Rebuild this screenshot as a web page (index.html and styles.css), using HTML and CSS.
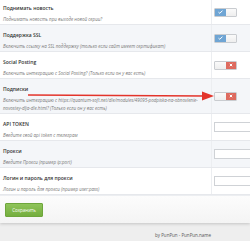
FILE: index.html
```html
<!DOCTYPE html>
<html lang="ru">
<head>
  <meta charset="UTF-8" />
  <meta name="viewport" content="width=device-width, initial-scale=1.0"/>
  <title>Настройки модуля</title>
  <link rel="stylesheet" href="styles.css">
</head>
<body>
  <div class="panel">
    <div class="row first">
      <div class="label">
        <div class="title">Поднимать новость</div>
        <div class="desc">Поднимать новость при выходе новой серии?</div>
      </div>
      <div class="control">
        <span class="toggle on">
          <span class="part blue"><svg width="5" height="4" viewBox="0 0 5 4"><polyline points="0.5,2.2 1.8,3.3 4.5,0.6" fill="none" stroke="#fff" stroke-width="1"/></svg></span>
          <span class="part plain"></span>
        </span>
      </div>
    </div>

    <div class="row alt">
      <div class="label">
        <div class="title">Поддержка SSL</div>
        <div class="desc">Включить ссылку на SSL поддержку (только если сайт имеет сертификат)</div>
      </div>
      <div class="control">
        <span class="toggle on">
          <span class="part blue"><svg width="5" height="4" viewBox="0 0 5 4"><polyline points="0.5,2.2 1.8,3.3 4.5,0.6" fill="none" stroke="#fff" stroke-width="1"/></svg></span>
          <span class="part plain"></span>
        </span>
      </div>
    </div>

    <div class="row">
      <div class="label">
        <div class="title">Social Posting</div>
        <div class="desc">Включить интеграцию с Social Posting? (Только если он у вас есть)</div>
      </div>
      <div class="control">
        <span class="toggle off">
          <span class="part plain"></span>
          <span class="part red"><svg width="4" height="4" viewBox="0 0 4 4"><path d="M0.8 0.8 L3.2 3.2 M3.2 0.8 L0.8 3.2" stroke="#fff" stroke-width="1"/></svg></span>
        </span>
      </div>
    </div>

    <div class="row alt">
      <div class="label">
        <div class="title">Подписки</div>
        <div class="desc">Включить интеграцию с https://quantum-soft.net/dle/modules/49095-podpiska-na-obnovlenie-<br>novostey-dlja-dle.html? (Только если он у вас есть)</div>
      </div>
      <div class="control">
        <span class="toggle off">
          <span class="part plain"></span>
          <span class="part red"><svg width="4" height="4" viewBox="0 0 4 4"><path d="M0.8 0.8 L3.2 3.2 M3.2 0.8 L0.8 3.2" stroke="#fff" stroke-width="1"/></svg></span>
        </span>
      </div>
    </div>

    <div class="row">
      <div class="label">
        <div class="title">API TOKEN</div>
        <div class="desc">Введите свой api token с телеграм</div>
      </div>
      <div class="control">
        <input type="text" class="field" />
      </div>
    </div>

    <div class="row alt">
      <div class="label">
        <div class="title">Прокси</div>
        <div class="desc">Введите Прокси (пример ip:port)</div>
      </div>
      <div class="control">
        <input type="text" class="field" />
      </div>
    </div>

    <div class="row">
      <div class="label">
        <div class="title">Логин и пароль для прокси</div>
        <div class="desc">Логин и пароль для прокси (пример user:pass)</div>
      </div>
      <div class="control">
        <input type="text" class="field" />
      </div>
    </div>

    <div class="actions">
      <button class="save">Сохранить</button>
    </div>
  </div>

  <div class="footer">by PunPun - PunPun.name</div>

  <!-- red pointer drawn over the settings list -->
  <svg class="arrow" width="250" height="241" viewBox="0 0 250 241">
    <line x1="28" y1="95" x2="205" y2="96" stroke="#e3342b" stroke-width="1.3"/>
    <polygon points="202,91.5 214,96 202,100.5" fill="#e3342b"/>
  </svg>
</body>
</html>
```

FILE: styles.css
```css
html, body {
  margin: 0;
  overflow: hidden;
}

body {
  font-family: "Open Sans", "Liberation Sans", sans-serif;
  background-color: #eeeeee;
  color: #333;
  position: relative;
  width: 250px;
  height: 241px;
}

.panel {
  background-color: #fff;
  box-shadow: 0 1px 3px rgba(0, 0, 0, 0.18);
}

.row {
  display: grid;
  grid-template-columns: 211px 1fr;
  border-bottom: 1px solid #e6e8ec;
  background-color: #fff;
}

.row.alt {
  background-color: #f4f6f9;
}

.label {
  padding: 7px 3px 1px;
}

.row.first .label {
  padding-top: 5px;
}

.title {
  font-size: 5px;
  font-weight: 600;
  line-height: 7px;
  color: #333;
}

.desc {
  font-size: 4.5px;
  font-style: italic;
  line-height: 8px;
  margin-top: 3px;
  color: #7a7a7a;
}

.control {
  border-left: 1px solid #eceef1;
  padding-left: 2px;
  display: flex;
  align-items: center;
  min-width: 0;
}

.toggle {
  display: inline-flex;
  height: 9px;
  border: 1px solid #c9ccd0;
  border-radius: 1px;
  box-sizing: border-box;
  overflow: hidden;
}

.part {
  display: flex;
  align-items: center;
  justify-content: center;
}

.toggle.on .blue {
  width: 11px;
  background-color: #6fa5d4;
}

.toggle.on .plain {
  width: 10px;
  background: linear-gradient(#fafafa, #eeeeee);
}

.toggle.off .plain {
  width: 11px;
  background: linear-gradient(#fafafa, #eeeeee);
}

.toggle.off .red {
  width: 10px;
  background-color: #de6b5f;
}

.field {
  flex: 1;
  min-width: 0;
  width: auto;
  height: 10px;
  box-sizing: border-box;
  margin: 0;
  padding: 0;
  border: 1px solid #cfd2d6;
  border-right: none;
  background-color: #fff;
}

.actions {
  padding: 7px 5px 6px;
  background: linear-gradient(#fcfcfc, #f4f4f4);
  border-top: 1px solid #eceef1;
}

.save {
  display: block;
  width: 38px;
  height: 14px;
  margin: 0;
  padding: 0;
  border: 1px solid #6ea63c;
  border-radius: 1px;
  background: linear-gradient(#8fc45a, #74ae3e);
  color: #fff;
  font-family: "Open Sans", "Liberation Sans", sans-serif;
  font-size: 4.5px;
  line-height: 12px;
}

.footer {
  padding: 8px 39px 0 0;
  text-align: right;
  font-size: 4.5px;
  line-height: 8px;
  color: #555;
}

.arrow {
  position: absolute;
  left: 0;
  top: 0;
  pointer-events: none;
}
```
